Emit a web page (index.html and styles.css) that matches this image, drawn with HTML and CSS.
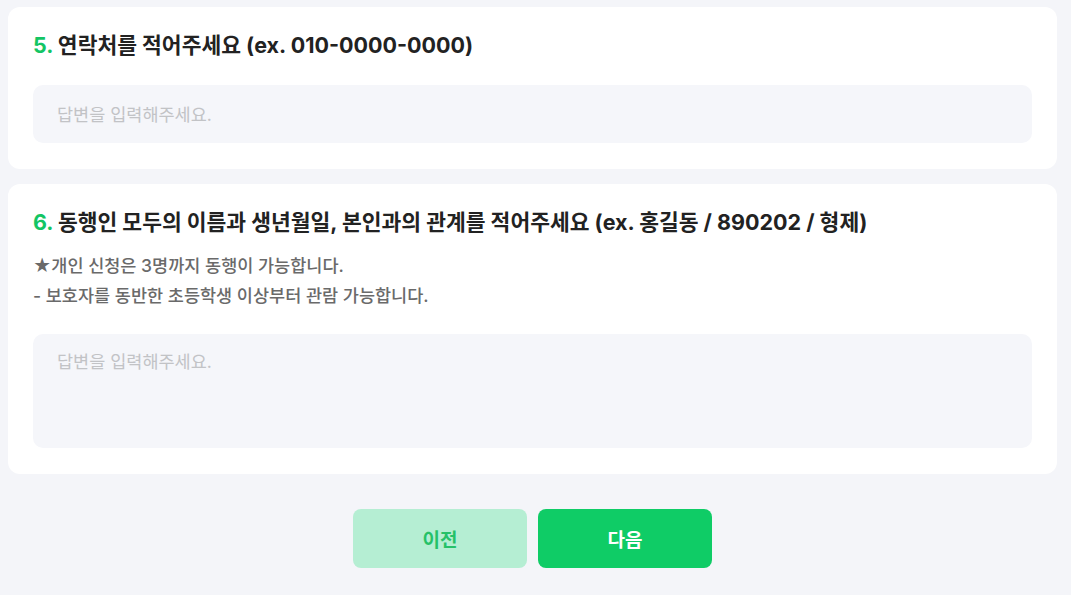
FILE: index.html
```html
<!DOCTYPE html>
<html lang="ko">

<head>
    <meta charset="utf-8">
    <title>신청서</title>
    <link rel="stylesheet" href="styles.css">
</head>

<body>
    <div class="container">
        <div class="question-card">
            <h2 class="question-title"><span class="question-num">5.</span> 연락처를 적어주세요 (ex. 010-0000-0000)</h2>
            <input class="answer-input" type="text" placeholder="답변을 입력해주세요.">
        </div>

        <div class="question-card">
            <h2 class="question-title"><span class="question-num">6.</span> 동행인 모두의 이름과 생년월일, 본인과의 관계를 적어주세요 (ex. 홍길동 / 890202 / 형제)</h2>
            <p class="question-desc">★개인 신청은 3명까지 동행이 가능합니다.<br>- 보호자를 동반한 초등학생 이상부터 관람 가능합니다.</p>
            <textarea class="answer-textarea" placeholder="답변을 입력해주세요."></textarea>
        </div>

        <div class="button-row">
            <button class="prev-button">이전</button>
            <button class="next-button">다음</button>
        </div>
    </div>
</body>

</html>
```

FILE: styles.css
```css
* {
    box-sizing: border-box;
}

body {
    margin: 0;
    padding: 0;
    font-family: Inter, "Noto Sans CJK KR", sans-serif;
    background-color: #f4f5f9;
}

.container {
    padding: 7px 14px 0 8px;
    display: flex;
    flex-direction: column;
    gap: 15px;
}

.question-card {
    background-color: white;
    border-radius: 12px;
    padding: 24px 25px 26px;
}

.question-title {
    margin: 0;
    font-size: 21.5px;
    font-weight: 700;
    line-height: 28px;
    color: #222;
}

.question-num {
    color: #13c564;
}

.question-desc {
    margin: 15px 0 0;
    font-size: 17.5px;
    font-weight: 500;
    line-height: 30px;
    color: #6a6a6a;
}

.answer-input,
.answer-textarea {
    display: block;
    width: 100%;
    border: none;
    outline: none;
    border-radius: 10px;
    background-color: #f5f6fa;
    font-family: inherit;
    font-size: 17.5px;
    color: #333;
    padding: 0 24px;
}

.answer-input {
    height: 58px;
    margin-top: 26px;
}

.answer-textarea {
    height: 114px;
    margin-top: 23px;
    padding-top: 14px;
    resize: none;
}

.answer-input::placeholder,
.answer-textarea::placeholder {
    color: #c2c3c6;
}

.button-row {
    display: flex;
    justify-content: center;
    gap: 11px;
    margin-top: 20px;
}

.prev-button,
.next-button {
    width: 174px;
    height: 59px;
    border: none;
    border-radius: 8px;
    font-family: inherit;
    font-size: 19px;
    font-weight: 700;
    cursor: pointer;
}

.prev-button {
    background-color: #b5eed3;
    color: #26c168;
}

.next-button {
    background-color: #0fcc66;
    color: white;
}
```
